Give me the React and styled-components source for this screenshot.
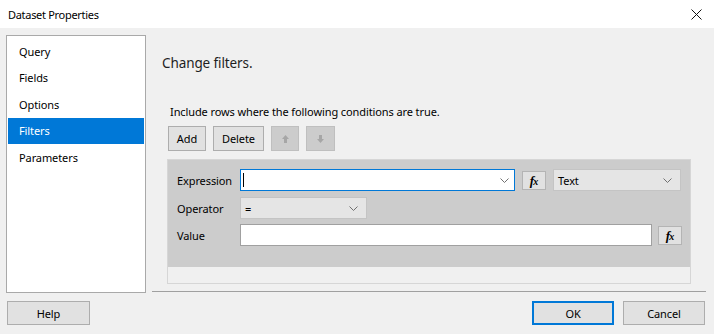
import styled, { createGlobalStyle } from 'styled-components';

const GlobalStyle = createGlobalStyle`
  html, body {
    margin: 0;
    padding: 0;
    background: #f0f0f0;
  }
  body {
    font-family: "Noto Sans", "Open Sans", sans-serif;
    font-size: 11px;
    letter-spacing: -0.1px;
    color: #000;
  }
  * {
    box-sizing: border-box;
  }
`;

const pages = ['Query', 'Fields', 'Options', 'Filters', 'Parameters'];

function Chevron() {
    return (
        <svg width="9" height="5" viewBox="0 0 9 5">
            <path d="M0.5 0.5 L4.5 4.5 L8.5 0.5" fill="none" stroke="#707070" strokeWidth="1" />
        </svg>
    );
}

function Arrow({ down }) {
    return (
        <svg width="7" height="8" viewBox="0 0 7 8" style={down ? { transform: 'rotate(180deg)' } : undefined}>
            <polygon points="3.5,0 7,4 5,4 5,8 2,8 2,4 0,4" fill="#a6a6a6" />
        </svg>
    );
}

function App() {
    return (
        <>
            <GlobalStyle />
            <Ventana>
                <BarraTitulo>
                    <span>Dataset Properties</span>
                    <svg width="11" height="11" viewBox="0 0 11 11">
                        <path d="M0.5 0.5 L10.5 10.5 M10.5 0.5 L0.5 10.5" stroke="#111" strokeWidth="1" />
                    </svg>
                </BarraTitulo>

                <Cuerpo>
                    <Navegacion>
                        {pages.map((p) => (
                            <ItemNav key={p} $activo={p === 'Filters'}>
                                {p}
                            </ItemNav>
                        ))}
                    </Navegacion>

                    <Panel>
                        <Encabezado>Change filters.</Encabezado>
                        <Intro>Include rows where the following conditions are true.</Intro>
                        <FilaBotones>
                            <Boton $ancho={38}>Add</Boton>
                            <Boton $ancho={51}>Delete</Boton>
                            <Boton $ancho={28} $inactivo>
                                <Arrow />
                            </Boton>
                            <Boton $ancho={29} $inactivo>
                                <Arrow down />
                            </Boton>
                        </FilaBotones>

                        <CajaFiltros>
                            <ZonaGris>
                                <FilaCampo>
                                    <Etiqueta>Expression</Etiqueta>
                                    <Entrada $ancho={275} $foco>
                                        <Cursor />
                                        <Chevron />
                                    </Entrada>
                                    <BotonFx $sep={7}>
                                        <b>f</b>
                                        <small>x</small>
                                    </BotonFx>
                                    <Selector $ancho={128} $sep={7}>
                                        <span>Text</span>
                                        <Chevron />
                                    </Selector>
                                </FilaCampo>
                                <FilaCampo>
                                    <Etiqueta>Operator</Etiqueta>
                                    <Selector $ancho={127}>
                                        <span>=</span>
                                        <Chevron />
                                    </Selector>
                                </FilaCampo>
                                <FilaCampo>
                                    <Etiqueta>Value</Etiqueta>
                                    <Entrada $ancho={412} />
                                    <BotonFx $sep={6}>
                                        <b>f</b>
                                        <small>x</small>
                                    </BotonFx>
                                </FilaCampo>
                            </ZonaGris>
                            <ZonaVacia />
                        </CajaFiltros>
                    </Panel>
                </Cuerpo>

                <Pie>
                    <Boton $ancho={83} $alto={24}>Help</Boton>
                    <Separador />
                    <Boton $ancho={82} $alto={24} $principal>OK</Boton>
                    <Boton $ancho={82} $alto={24}>Cancel</Boton>
                </Pie>
            </Ventana>
        </>
    );
}

export default App;

const Ventana = styled.div`
    width: 714px;
    height: 334px;
    display: flex;
    flex-direction: column;
    background: #f0f0f0;
    overflow: hidden;
`;

const BarraTitulo = styled.div`
    height: 28px;
    background: #fff;
    display: flex;
    align-items: center;
    justify-content: space-between;
    padding: 0 12px 0 8px;
    letter-spacing: -0.3px;
`;

const Cuerpo = styled.div`
    display: flex;
    padding: 7px 8px 0 6px;
`;

const Navegacion = styled.div`
    width: 140px;
    height: 258px;
    background: #fff;
    border: 1px solid #a9a9a9;
    padding: 2px 1px 1px 1px;
`;

const ItemNav = styled.div`
    height: 26.5px;
    display: flex;
    align-items: center;
    padding-left: 11px;
    background: ${(p) => (p.$activo ? '#0078d7' : 'transparent')};
    color: ${(p) => (p.$activo ? '#fff' : '#000')};
`;

const Panel = styled.div`
    flex: 1;
    margin-left: 6px;
    height: 257px;
    border-bottom: 1px solid #a0a0a0;
    display: flex;
    flex-direction: column;
`;

const Encabezado = styled.div`
    font-size: 13.5px;
    line-height: 20px;
    margin: 18px 0 0 10px;
    color: #1e1e1e;
`;

const Intro = styled.div`
    line-height: 16px;
    margin: 31px 0 0 18px;
`;

const FilaBotones = styled.div`
    display: flex;
    gap: 7px;
    margin: 6px 0 0 16px;
`;

const Boton = styled.div`
    width: ${(p) => p.$ancho}px;
    height: ${(p) => p.$alto || 25}px;
    display: flex;
    align-items: center;
    justify-content: center;
    background: ${(p) => (p.$inactivo ? '#cccccc' : '#e1e1e1')};
    border: 1px solid ${(p) => (p.$principal ? '#0078d7' : p.$inactivo ? '#bfbfbf' : '#adadad')};
    box-shadow: ${(p) => (p.$principal ? 'inset 0 0 0 1px #0078d7' : 'none')};
`;

const CajaFiltros = styled.div`
    margin: 8px 15px 0 15px;
    height: 125px;
    border: 1px solid #d6d6d6;
    display: flex;
    flex-direction: column;
`;

const ZonaGris = styled.div`
    height: 107px;
    background: #cccccc;
    padding: 9px 0 0 9px;
    display: flex;
    flex-direction: column;
    gap: 6px;

    & > :last-child {
        margin-top: -1px;
    }
`;

const ZonaVacia = styled.div`
    flex: 1;
    background: #f0f0f0;
`;

const FilaCampo = styled.div`
    display: flex;
    align-items: center;
    height: 22px;
`;

const Etiqueta = styled.div`
    width: 63px;
`;

const Entrada = styled.div`
    width: ${(p) => p.$ancho}px;
    height: 22px;
    background: #fff;
    border: 1px solid ${(p) => (p.$foco ? '#0078d7' : '#a0a0a0')};
    display: flex;
    align-items: center;
    justify-content: space-between;
    padding: 0 5px 0 2px;
`;

const Cursor = styled.span`
    width: 1px;
    height: 14px;
    background: #000;
`;

const Selector = styled.div`
    width: ${(p) => p.$ancho}px;
    height: 22px;
    margin-left: ${(p) => p.$sep || 0}px;
    background: #e5e5e5;
    border: 1px solid #c4c4c4;
    display: flex;
    align-items: center;
    justify-content: space-between;
    padding: 0 8px 0 4px;
`;

const BotonFx = styled.div`
    width: 24px;
    height: 19px;
    margin-left: ${(p) => p.$sep}px;
    background: #e1e1e1;
    border: 1px solid #b4b4b4;
    display: flex;
    align-items: center;
    justify-content: center;
    font-family: "Liberation Serif", serif;
    font-style: italic;
    font-weight: bold;
    font-size: 13px;
    letter-spacing: 0;
    line-height: 1;

    small {
        font-size: 10px;
        margin-left: -1px;
        margin-top: 3px;
    }
`;

const Pie = styled.div`
    display: flex;
    gap: 9px;
    padding: 8px 9px 0 7px;
`;

const Separador = styled.div`
    flex: 1;
`;
